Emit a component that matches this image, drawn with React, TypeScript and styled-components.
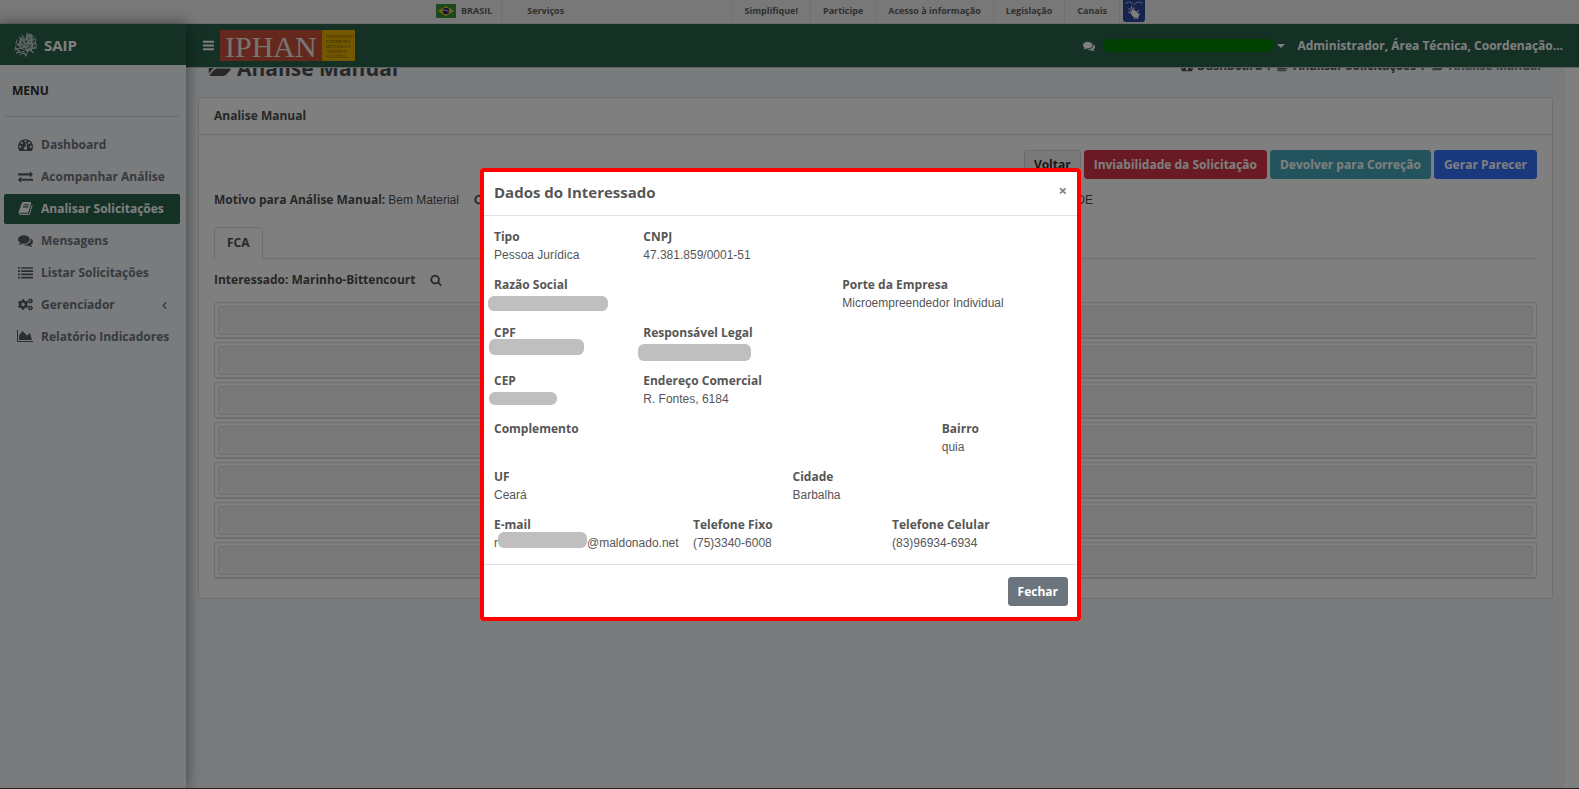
import React from "react";
import styled, { createGlobalStyle } from "styled-components";
import { FaCogs } from "react-icons/fa";
import { ChevronLeft } from "lucide-react";

const GlobalStyle = createGlobalStyle`
  *, *::before, *::after { box-sizing: border-box; }
  html, body { margin: 0; padding: 0; }
  body {
    font-family: "Open Sans", "Liberation Sans", sans-serif;
    font-size: 12px;
    line-height: 18px;
    color: #565656;
    background: #ffffff;
  }
  a { color: inherit; text-decoration: none; }
  ul, ol, dl, dd, h1, h2, h3, p { margin: 0; padding: 0; }
  ul, ol { list-style: none; }
  button { font: inherit; cursor: pointer; }
`;

const colors = {
  green: "#2a624c",
  page: "#f4f7fa",
  border: "#dfdfdf",
  ink: "#4f4f4f",
};

/* ---------- icons ---------- */

const IconSvg = styled.svg<{ $size: number }>`
  height: ${(p) => p.$size}px;
  width: auto;
  flex: none;
  display: block;
  fill: currentColor;
`;

type IconProps = { d: string; size?: number; wide?: boolean };

const Icon = ({ d, size = 14, wide = false }: IconProps) => (
  <IconSvg $size={size} viewBox={wide ? "0 0 2048 1792" : "0 0 1792 1792"} aria-hidden="true">
    <path d={d} />
  </IconSvg>
);

const paths = {
  dashboard:
    "M384 1152q0-53-37.5-90.5t-90.5-37.5-90.5 37.5-37.5 90.5 37.5 90.5 90.5 37.5 90.5-37.5 37.5-90.5zm192-448q0-53-37.5-90.5t-90.5-37.5-90.5 37.5-37.5 90.5 37.5 90.5 90.5 37.5 90.5-37.5 37.5-90.5zm428 481l101-382q6-26-7.5-48.5t-38.5-29.5-48 6.5-30 39.5l-101 382q-60 5-107 43.5t-63 98.5q-20 77 20 146t117 89 146-20 89-117q16-60-6-117t-72-91zm660-33q0-53-37.5-90.5t-90.5-37.5-90.5 37.5-37.5 90.5 37.5 90.5 90.5 37.5 90.5-37.5 37.5-90.5zm-640-640q0-53-37.5-90.5t-90.5-37.5-90.5 37.5-37.5 90.5 37.5 90.5 90.5 37.5 90.5-37.5 37.5-90.5zm448 192q0-53-37.5-90.5t-90.5-37.5-90.5 37.5-37.5 90.5 37.5 90.5 90.5 37.5 90.5-37.5 37.5-90.5zm320 448q0 261-141 483-19 29-54 29h-1402q-35 0-54-29-141-221-141-483 0-182 71-348t191-286 286-191 348-71 348 71 286 191 191 286 71 348z",
  exchange:
    "M1792 1184v192q0 13-9.5 22.5t-22.5 9.5h-1376v192q0 13-9.5 22.5t-22.5 9.5q-12 0-24-10l-319-320q-9-9-9-22 0-14 9-23l320-320q9-9 23-9 13 0 22.5 9.5t9.5 22.5v192h1376q13 0 22.5 9.5t9.5 22.5zm0-544q0 14-9 23l-320 320q-9 9-23 9-13 0-22.5-9.5t-9.5-22.5v-192h-1376q-13 0-22.5-9.5t-9.5-22.5v-192q0-13 9.5-22.5t22.5-9.5h1376v-192q0-14 9-23t23-9q12 0 24 10l319 319q9 9 9 23z",
  book:
    "M1703 478q40 57 18 129l-275 906q-19 64-76.5 107.5t-122.5 43.5h-923q-77 0-148.5-53.5t-99.5-131.5q-24-67-2-127 0-4 3-27t4-37q1-8-3-21.5t-3-19.5q2-11 8-21t16.5-23.5 16.5-23.5q23-38 45-91.5t30-91.5q3-10 .5-30t-.5-28q3-11 17-28t17-23q21-36 42-92t25-90q1-9-2.5-32t.5-28q4-13 22-30.5t22-22.5q19-26 42.5-84.5t27.5-96.5q1-8-3-25.5t-2-26.5q2-8 9-18t18-23 17-21q8-12 16.5-30.5t15-35 16-36 19.5-32 26.5-23.5 36-11.5 47.5 5.5l-1 3q38-9 51-9h761q74 0 114 56t18 130l-274 906q-36 119-71.5 153.5t-128.5 34.5h-869q-27 0-38 15-11 16-1 43 24 70 144 70h923q29 0 56-15.5t35-41.5l300-987q7-22 5-57 38 15 59 43zm-1064 2q-4 13 2 22.5t20 9.5h608q13 0 25.5-9.5t16.5-22.5l21-64q4-13-2-22.5t-20-9.5h-608q-13 0-25.5 9.5t-16.5 22.5zm-83 256q-4 13 2 22.5t20 9.5h608q13 0 25.5-9.5t16.5-22.5l21-64q4-13-2-22.5t-20-9.5h-608q-13 0-25.5 9.5t-16.5 22.5z",
  comments:
    "M1408 768q0 139-94 257t-256.5 186.5-353.5 68.5q-86 0-176-16-124 88-278 128-36 9-86 16h-3q-11 0-20.5-8t-11.5-21q-1-3-1-6.5t.5-6.5 2-6l2.5-5 3.5-5.5 4-5 4.5-5 4-4.5q5-6 23-25t26-29.5 22.5-29 25-38.5 20.5-44q-124-72-195-177t-71-224q0-139 94-257t256.5-186.5 353.5-68.5 353.5 68.5 256.5 186.5 94 257zm384 256q0 120-71 224.5t-195 176.5q10 24 20.5 44t25 38.5 22.5 29 26 29.5 23 25q1 1 4 4.5t4.5 5 4 5 3.5 5.5l2.5 5 2 6 .5 6.5-1 6.5q-3 14-13 22t-22 7q-50-7-86-16-154-40-278-128-90 16-176 16-271 0-472-132 58 4 88 4 161 0 309-45t264-129q125-92 192-212t67-254q0-77-23-152 129 71 204 178t75 230z",
  list:
    "M0 256h256v192h-256zM384 256h1408v192h-1408zM0 640h256v192h-256zM384 640h1408v192h-1408zM0 1024h256v192h-256zM384 1024h1408v192h-1408zM0 1408h256v192h-256zM384 1408h1408v192h-1408z",
  area:
    "M2048 1536v128h-2048v-1536h128v1408h1920zm-384-1024l256 896h-1664v-576l448-576 576 576z",
  search:
    "M1216 832q0-185-131.5-316.5t-316.5-131.5-316.5 131.5-131.5 316.5 131.5 316.5 316.5 131.5 316.5-131.5 131.5-316.5zm512 832q0 52-38 90t-90 38q-54 0-90-38l-343-342q-179 124-399 124-143 0-273.5-55.5t-225-150-150-225-55.5-273.5 55.5-273.5 150-225 225-150 273.5-55.5 273.5 55.5 225 150 150 225 55.5 273.5q0 220-124 399l343 343q37 37 37 90z",
  bars:
    "M1664 1344v128q0 26-19 45t-45 19h-1408q-26 0-45-19t-19-45v-128q0-26 19-45t45-19h1408q26 0 45 19t19 45zm0-512v128q0 26-19 45t-45 19h-1408q-26 0-45-19t-19-45v-128q0-26 19-45t45-19h1408q26 0 45 19t19 45zm0-512v128q0 26-19 45t-45 19h-1408q-26 0-45-19t-19-45v-128q0-26 19-45t45-19h1408q26 0 45 19t19 45z",
  folder:
    "M1943 952q0 31-31 66l-336 396q-43 51-120.5 86.5t-143.5 35.5h-1088q-34 0-60.5-13t-26.5-43q0-31 31-66l336-396q43-51 120.5-86.5t143.5-35.5h1088q34 0 60.5 13t26.5 43zm-343-344v160h-832q-94 0-197 47.5t-164 119.5l-337 396-5 6q0-4-.5-12.5t-.5-12.5v-960q0-92 66-158t158-66h320q92 0 158 66t66 158v32h544q92 0 158 66t66 158z",
};

const Drawing = styled.svg`
  display: block;
  flex: none;
`;

const BrazilFlag = () => (
  <Drawing width="20" height="14" viewBox="0 0 20 14" aria-hidden="true">
    <rect width="20" height="14" fill="#3b8f38" />
    <path d="M10 2l8 5-8 5-8-5z" fill="#ecd21c" />
    <circle cx="10" cy="7" r="3.3" fill="#2a1f86" />
    <path d="M7.2 6q3-.4 5.6 1.9" stroke="#fff" strokeWidth=".8" fill="none" />
  </Drawing>
);

const HandsIcon = () => (
  <Drawing width="22" height="22" viewBox="0 0 22 22" aria-hidden="true">
    <path d="M0 0h22v19q0 3-3 3h-16q-3 0-3-3z" fill="#2b479c" />
    <path d="M2 3.500q4-3 7-.5l2 1.500 2-1.500q3-2.500 7 .5" stroke="#c9d1ea" strokeWidth=".8" fill="none" />
    <path
      d="M6 8.500l3 4M8.500 6.500l1 5M5.500 12l4 2M11 8l-.8 4"
      stroke="#fff"
      strokeWidth="1"
      strokeLinecap="round"
      fill="none"
    />
    <path
      d="M8 12q3-3 5-1l2 2 1 3-1 2-3-.500q-4-1-4-5.500z"
      fill="#fff"
    />
    <path
      d="M14 12l2-1.500M15 14.500l2-.5M13.500 17l1 2M11.500 17l.5 2"
      stroke="#fff"
      strokeWidth="1"
      strokeLinecap="round"
      fill="none"
    />
  </Drawing>
);

const CrestIcon = () => (
  <Drawing width="24" height="25" viewBox="0 0 24 25" aria-hidden="true">
    <g stroke="#fff" strokeWidth="1" strokeLinecap="round" fill="none" opacity=".75">
      <path d="M12 24l-3-5M12 24l2-6M11 22l-3-1-2 2M5 5l3 4-3 1 3 3-5-1 4 4-6 1 5 2-4 2 6-1M18 4l-3 5 5-2-3 4 5 0-5 3 5 2-6 1 4 4-5-3" />
      <path d="M8 3l3 5M13 1l-1 6M16 2l-3 6M9 9l3 3 3-4M9 13l3 3 3-4M8 16l4 3 4-3M10 5l-3 2M14 5l4-1M20 5l2 3-1 3M3 8l-1 4M2 14l-1 4M22 12v4" />
      <path d="M15 2l3 1v6l-3 3-3-5zM7 6l4 3-1 6-3 2-2-4zM14 11l5 1-1 5-4 2-3-3z" fill="#fff" fillOpacity=".45" />
    </g>
  </Drawing>
);

const IphanLogo = () => (
  <Drawing width="135" height="31" viewBox="0 0 135 31" role="img" aria-label="IPHAN">
    <rect width="102" height="31" fill="#c8513a" />
    <rect x="102" width="33" height="31" fill="#e8b000" />
    <text x="5" y="27" fontFamily="Liberation Serif, serif" fontWeight="400" fontSize="30" fill="#f0ebe6">
      IPHAN
    </text>
    <g fontFamily="Liberation Serif, serif" fontSize="4" fontWeight="400" fill="#6e5410">
      <text x="106" y="8">INSTITUTO DO</text>
      <text x="106" y="13">PATRIMÔNIO</text>
      <text x="106" y="18">HISTÓRICO E</text>
      <text x="106" y="23">ARTÍSTICO</text>
      <text x="106" y="28">NACIONAL</text>
    </g>
  </Drawing>
);

/* ---------- government bar ---------- */

const GovBar = styled.nav`
  height: 24px;
  padding-left: 2px;
  background: #f1f1f1;
  border-bottom: 1px solid #dcdcdc;
  display: flex;
  justify-content: center;
  font-size: 9px;
  font-weight: 700;
  color: #606060;
`;

const GovInner = styled.div`
  display: flex;
  width: 100%;
  max-width: 709px;
`;

const GovBrand = styled.a`
  display: flex;
  align-items: center;
  gap: 5px;
  padding-right: 9px;
  padding-bottom: 1px;
  border-right: 1px solid ${colors.border};
`;

const GovServices = styled.a`
  display: flex;
  align-items: center;
  padding: 0 25px 1px;
  margin-right: auto;
`;

const GovLinks = styled.ul`
  display: flex;
  border-left: 1px solid ${colors.border};
`;

const GovItem = styled.li`
  display: flex;
  border-right: 1px solid ${colors.border};
`;

const GovLink = styled.a`
  display: flex;
  align-items: center;
  padding: 0 12px 1px;
`;

const GovHands = styled.a`
  padding-left: 3px;
`;

/* ---------- shell ---------- */

const Shell = styled.div`
  display: flex;
  flex-direction: column;
  min-height: 100vh;
`;

const Columns = styled.div`
  flex: 1;
  display: flex;
`;

const Sidebar = styled.aside`
  position: relative;
  z-index: 1;
  flex: 0 0 186px;
  background: ${colors.page};
  box-shadow: 0 0 14px rgba(0, 0, 0, 0.5);
`;

const Brand = styled.a`
  display: flex;
  align-items: center;
  gap: 6px;
  height: 41px;
  padding: 0 14px;
  background: ${colors.green};
  color: #fff;
  font-size: 15px;
  font-weight: 700;
`;

const MenuTitle = styled.h2`
  margin: 0 6px 0 4px;
  padding: 17px 8px;
  height: 52px;
  border-bottom: 1px solid #d6d9dc;
  font-size: 12px;
  line-height: 18px;
  font-weight: 700;
  color: #2d2d2d;
`;

const Menu = styled.ul`
  display: flex;
  flex-direction: column;
  gap: 2px;
  padding: 13px 6px 0 4px;
`;

const MenuLink = styled.a<{ $active?: boolean }>`
  display: flex;
  align-items: center;
  height: 30px;
  padding: 0 10px 0 13px;
  border-radius: 2px;
  font-weight: 700;
  color: ${(p) => (p.$active ? "#fff" : "#6c757d")};
  background: ${(p) => (p.$active ? colors.green : "transparent")};
  white-space: nowrap;
`;

const MenuIcon = styled.span<{ $active?: boolean }>`
  display: flex;
  justify-content: center;
  width: 16px;
  margin: 0 8px 2px 0;
  font-size: 15px;
  color: ${(p) => (p.$active ? "#fff" : "#555d66")};
`;

const MenuArrow = styled.span`
  display: flex;
  margin-left: auto;
`;

const Main = styled.main`
  flex: 1;
  min-width: 0;
  display: flex;
  flex-direction: column;
`;

const TopBar = styled.header`
  display: flex;
  align-items: center;
  height: 44px;
  padding: 0 16px;
  background: ${colors.green};
  border-bottom: 1px solid #b9c9c2;
  color: #fff;
  font-weight: 700;
`;

const BareButton = styled.button`
  display: flex;
  align-items: center;
  padding: 0;
  border: 0;
  background: transparent;
  color: inherit;
`;

const LogoLink = styled.a`
  margin: 0 auto 0 5px;
`;

const UserPill = styled.span`
  width: 171px;
  height: 13px;
  margin: 0 3px 0 8px;
  border-radius: 6px;
  background: #008000;
`;

const Caret = styled.span`
  margin-right: 12px;
  border: 4px solid transparent;
  border-top-color: #fff;
  border-bottom: 0;
`;

const Content = styled.div`
  flex: 1;
  margin-right: 14px;
  padding: 0 12px;
  overflow: hidden;
  background: ${colors.page};
`;

const TitleRow = styled.div`
  display: flex;
  justify-content: space-between;
  height: 29px;
  padding: 0 12px 0 10px;
`;

const PageTitle = styled.h1`
  display: flex;
  align-items: center;
  gap: 5px;
  height: 32px;
  margin-top: -16px;
  font-size: 21px;
  font-weight: 700;
  color: ${colors.ink};
`;

const Breadcrumb = styled.ol`
  display: flex;
  height: 18px;
  margin-top: -11px;
  gap: 5px;
  font-weight: 700;
  color: ${colors.ink};
`;

const Crumb = styled.li<{ $current?: boolean }>`
  display: flex;
  align-items: center;
  gap: 4px;
  color: ${(p) => (p.$current ? "#6c757d" : "inherit")};
`;

/* ---------- card ---------- */

const Card = styled.section`
  background: #fff;
  border: 1px solid ${colors.border};
  border-radius: 3px;
`;

const CardTitle = styled.h2`
  padding: 9px 15px;
  border-bottom: 1px solid ${colors.border};
  font-size: 12px;
  line-height: 18px;
  font-weight: 700;
  color: ${colors.ink};
`;

const CardBody = styled.div`
  padding: 15px 15px 19px;
`;

const Actions = styled.div`
  display: flex;
  justify-content: flex-end;
  gap: 3px;
`;

type Tone = "light" | "danger" | "info" | "primary" | "secondary";

const tones: Record<Tone, [string, string, string]> = {
  light: ["#f2f2f2", "#d8d8d8", "#333"],
  danger: ["#d3344a", "#d3344a", "#fff"],
  info: ["#47a8bb", "#47a8bb", "#fff"],
  primary: ["#3270fc", "#3270fc", "#fff"],
  secondary: ["#6c757d", "#6c757d", "#fff"],
};

const Button = styled.button<{ $tone: Tone }>`
  height: 29px;
  padding: 0 9px;
  border: 1px solid ${(p) => tones[p.$tone][1]};
  border-radius: 3px;
  background: ${(p) => tones[p.$tone][0]};
  color: ${(p) => tones[p.$tone][2]};
  font-weight: 700;
  line-height: 18px;
`;

const ReasonRow = styled.div`
  display: grid;
  grid-template-columns: 2fr 1fr;
  margin-top: 12px;
`;

const Reason = styled.p`
  display: flex;
  align-items: center;
  gap: 3px;
  color: ${colors.ink};
`;

const Plain = styled.span`
  font-family: "Liberation Sans", Arial, sans-serif;
  font-size: 12px;
`;

const SearchButton = styled(BareButton)`
  margin-left: 12px;
`;

const ReasonEnd = styled(Plain)`
  margin-left: auto;
  padding-right: 3px;
`;

const Tabs = styled.div`
  display: flex;
  margin-top: 18px;
  border-bottom: 1px solid ${colors.border};
`;

const Tab = styled.button`
  height: 32px;
  margin-bottom: -1px;
  padding: 0 12px;
  border: 1px solid ${colors.border};
  border-bottom-color: #fff;
  border-radius: 3px 3px 0 0;
  background: #fff;
  font-weight: 700;
  color: ${colors.ink};
`;

const Party = styled.p`
  display: flex;
  align-items: center;
  gap: 3px;
  margin: 12px 0 13px;
  font-weight: 700;
  color: ${colors.ink};
`;

const Stack = styled.div`
  display: grid;
  gap: 3px;
`;

const Panel = styled.div`
  height: 37px;
  padding: 3px;
  border: 1px solid ${colors.border};
  border-bottom-width: 2px;
  border-radius: 3px;
`;

const PanelHead = styled.div`
  height: 29px;
  border: 1px solid ${colors.border};
  border-radius: 3px;
  background: #f3f3f3;
`;

/* ---------- modal ---------- */

const Backdrop = styled.div`
  position: fixed;
  inset: 0;
  z-index: 10;
  display: flex;
  justify-content: center;
  align-items: flex-start;
  padding: 168px 18px 0 0;
  overflow: auto;
  background: rgba(0, 0, 0, 0.5);
  border-bottom: 1px solid #222;
`;

const Dialog = styled.section`
  width: 601px;
  max-width: 100%;
  outline: 4px solid #f00;
  outline-offset: -4px;
  border-radius: 3px;
  background: #fff;
`;

const DialogHeader = styled.header`
  display: flex;
  justify-content: space-between;
  height: 48px;
  padding: 15px 14px 14px;
  border-bottom: 1px solid #dee2e6;
`;

const DialogTitle = styled.h2`
  font-size: 15px;
  line-height: 18px;
  font-weight: 700;
`;

const CloseButton = styled(BareButton)`
  height: 14px;
  font-size: 15px;
  line-height: 14px;
  font-weight: 700;
  color: #7f7f7f;
`;

const DialogBody = styled.div`
  display: grid;
  gap: 12px;
  padding: 12px 0 12px 4px;
`;

const FieldRow = styled.dl`
  display: grid;
  grid-template-columns: repeat(12, 1fr);
`;

const Field = styled.div<{ $span: number }>`
  position: relative;
  grid-column: span ${(p) => p.$span};
  min-width: 0;
  padding-left: 10px;
`;

const Label = styled.dt`
  font-weight: 700;
`;

const Value = styled.dd`
  display: flex;
  height: 18px;
  font-family: "Liberation Sans", Arial, sans-serif;
  white-space: nowrap;
`;

const Mask = styled.span<{ $w: number; $h: number; $x: number; $y: number }>`
  position: absolute;
  left: ${(p) => p.$x}px;
  top: ${(p) => p.$y}px;
  width: ${(p) => p.$w}px;
  height: ${(p) => p.$h}px;
  border-radius: 6px;
  background: #bfbfbf;
`;

const MailDomain = styled.span`
  margin-left: 89px;
`;

const DialogFooter = styled.footer`
  display: flex;
  justify-content: flex-end;
  padding: 12px 13px 15px;
  border-top: 1px solid #dee2e6;
`;

type FieldData = {
  label: string;
  span: number;
  value?: React.ReactNode;
  mask?: [number, number, number, number];
};

const rows: FieldData[][] = [
  [
    { label: "Tipo", span: 3, value: "Pessoa Jurídica" },
    { label: "CNPJ", span: 9, value: "47.381.859/0001-51" },
  ],
  [
    { label: "Razão Social", span: 7, mask: [120, 15, 4, 20] },
    { label: "Porte da Empresa", span: 5, value: "Microempreendedor Individual" },
  ],
  [
    { label: "CPF", span: 3, mask: [95, 16, 5, 15] },
    { label: "Responsável Legal", span: 9, mask: [113, 17, 5, 20] },
  ],
  [
    { label: "CEP", span: 3, mask: [68, 13, 5, 20] },
    { label: "Endereço Comercial", span: 9, value: "R. Fontes, 6184" },
  ],
  [
    { label: "Complemento", span: 9 },
    { label: "Bairro", span: 3, value: "quia" },
  ],
  [
    { label: "UF", span: 6, value: "Ceará" },
    { label: "Cidade", span: 6, value: "Barbalha" },
  ],
  [
    {
      label: "E-mail",
      span: 4,
      value: (
        <>
          r<MailDomain>@maldonado.net</MailDomain>
        </>
      ),
      mask: [89, 16, 14, 16],
    },
    { label: "Telefone Fixo", span: 4, value: "(75)3340-6008" },
    { label: "Telefone Celular", span: 4, value: "(83)96934-6934" },
  ],
];

const menu: { label: string; icon: React.ReactNode; active?: boolean; arrow?: boolean }[] = [
  { label: "Dashboard", icon: <Icon d={paths.dashboard} size={15} /> },
  { label: "Acompanhar Análise", icon: <Icon d={paths.exchange} size={15} /> },
  { label: "Analisar Solicitações", icon: <Icon d={paths.book} size={15} />, active: true },
  { label: "Mensagens", icon: <Icon d={paths.comments} size={15} /> },
  { label: "Listar Solicitações", icon: <Icon d={paths.list} size={15} /> },
  { label: "Gerenciador", icon: <FaCogs />, arrow: true },
  { label: "Relatório Indicadores", icon: <Icon d={paths.area} size={14} wide /> },
];

const govLinks = ["Simplifique!", "Participe", "Acesso à informação", "Legislação", "Canais"];

export default function App() {
  return (
    <>
      <GlobalStyle />
      <Shell>
        <GovBar>
          <GovInner>
            <GovBrand href="#">
              <BrazilFlag />
              BRASIL
            </GovBrand>
            <GovServices href="#">Serviços</GovServices>
            <GovLinks>
              {govLinks.map((label) => (
                <GovItem key={label}>
                  <GovLink href="#">{label}</GovLink>
                </GovItem>
              ))}
            </GovLinks>
            <GovHands href="#" aria-label="VLibras">
              <HandsIcon />
            </GovHands>
          </GovInner>
        </GovBar>

        <Columns>
          <Sidebar>
            <Brand href="#">
              <CrestIcon />
              SAIP
            </Brand>
            <MenuTitle>MENU</MenuTitle>
            <Menu>
              {menu.map((item) => (
                <li key={item.label}>
                  <MenuLink href="#" $active={item.active}>
                    <MenuIcon $active={item.active}>{item.icon}</MenuIcon>
                    {item.label}
                    {item.arrow && (
                      <MenuArrow>
                        <ChevronLeft size={11} strokeWidth={3} />
                      </MenuArrow>
                    )}
                  </MenuLink>
                </li>
              ))}
            </Menu>
          </Sidebar>

          <Main>
            <TopBar>
              <BareButton type="button" aria-label="Menu">
                <Icon d={paths.bars} size={13} />
              </BareButton>
              <LogoLink href="#">
                <IphanLogo />
              </LogoLink>
              <Icon d={paths.comments} size={12} />
              <UserPill />
              <Caret />
              <span>Administrador, Área Técnica, Coordenação...</span>
            </TopBar>

            <Content>
              <TitleRow>
                <PageTitle>
                  <Icon d={paths.folder} size={21} wide />
                  Analise Manual
                </PageTitle>
                <Breadcrumb>
                  <Crumb>
                    <Icon d={paths.dashboard} size={12} />
                    <a href="#">Dashboard</a>
                  </Crumb>
                  <li>/</li>
                  <Crumb>
                    <Icon d={paths.book} size={12} />
                    <a href="#">Analisar Solicitações</a>
                  </Crumb>
                  <li>/</li>
                  <Crumb $current>
                    <Icon d={paths.folder} size={12} wide />
                    Analise Manual
                  </Crumb>
                </Breadcrumb>
              </TitleRow>

              <Card>
                <CardTitle>Analise Manual</CardTitle>
                <CardBody>
                  <Actions>
                    <Button type="button" $tone="light">Voltar</Button>
                    <Button type="button" $tone="danger">Inviabilidade da Solicitação</Button>
                    <Button type="button" $tone="info">Devolver para Correção</Button>
                    <Button type="button" $tone="primary">Gerar Parecer</Button>
                  </Actions>
                  <ReasonRow>
                    <Reason>
                      <b>Motivo para Análise Manual:</b>
                      <Plain>Bem Material</Plain>
                      <SearchButton type="button" aria-label="Ver motivo">
                        <Icon d={paths.search} size={12} />
                      </SearchButton>
                      <ReasonEnd>DE</ReasonEnd>
                    </Reason>
                  </ReasonRow>
                  <Tabs role="tablist">
                    <Tab type="button" role="tab" aria-selected="true">FCA</Tab>
                  </Tabs>
                  <Party>
                    Interessado: Marinho-Bittencourt
                    <SearchButton type="button" aria-label="Ver interessado">
                      <Icon d={paths.search} size={12} />
                    </SearchButton>
                  </Party>
                  <Stack>
                    {Array.from({ length: 7 }, (_, i) => (
                      <Panel key={i}>
                        <PanelHead />
                      </Panel>
                    ))}
                  </Stack>
                </CardBody>
              </Card>
            </Content>
          </Main>
        </Columns>
      </Shell>

      <Backdrop>
        <Dialog role="dialog" aria-modal="true" aria-labelledby="dialog-title">
          <DialogHeader>
            <DialogTitle id="dialog-title">Dados do Interessado</DialogTitle>
            <CloseButton type="button" aria-label="Fechar janela">×</CloseButton>
          </DialogHeader>
          <DialogBody>
            {rows.map((row) => (
              <FieldRow key={row[0].label}>
                {row.map((field) => (
                  <Field key={field.label} $span={field.span}>
                    <Label>{field.label}</Label>
                    <Value>
                      {field.value}
                      {field.mask && (
                        <Mask
                          $w={field.mask[0]}
                          $h={field.mask[1]}
                          $x={field.mask[2]}
                          $y={field.mask[3]}
                        />
                      )}
                    </Value>
                  </Field>
                ))}
              </FieldRow>
            ))}
          </DialogBody>
          <DialogFooter>
            <Button type="button" $tone="secondary">Fechar</Button>
          </DialogFooter>
        </Dialog>
      </Backdrop>
    </>
  );
}
